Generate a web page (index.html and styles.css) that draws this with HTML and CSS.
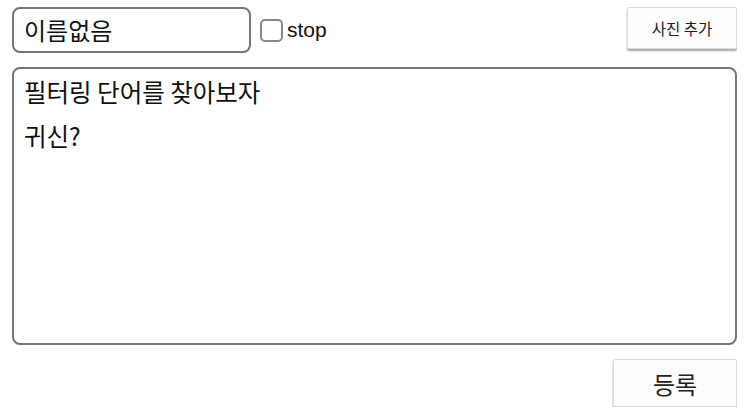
FILE: index.html
```html
<!DOCTYPE html>
<html>
<head>
    <title>글쓰기</title>
    <link rel="stylesheet" href="styles.css">
</head>
<body>
    <form class="post-form">
        <div class="top-row">
            <input type="text" class="name-input" value="이름없음">
            <label class="stop-label">
                <input type="checkbox" class="stop-check">
                <span>stop</span>
            </label>
            <button type="button" class="btn btn-photo">사진 추가</button>
        </div>
        <textarea class="content">필터링 단어를 찾아보자
귀신?</textarea>
        <div class="bottom-row">
            <button type="submit" class="btn btn-submit">등록</button>
        </div>
    </form>
</body>
</html>
```

FILE: styles.css
```css
body { margin: 7px 13px 0 12px; font-family: "Liberation Sans", "Noto Sans CJK KR", sans-serif; color: #111; background: #fff; }
.post-form { display: flex; flex-direction: column; gap: 14px; }
.top-row { display: flex; align-items: center; height: 46px; }
.name-input { width: 239px; height: 46px; box-sizing: border-box; border: 2px solid #777; border-radius: 8px; padding: 0 10px 2px; font-family: "Noto Sans CJK KR", sans-serif; font-size: 24px; color: #111; outline: none; }
.stop-label { display: flex; align-items: center; margin-left: 9px; font-size: 21px; gap: 4px; }
.stop-check { appearance: none; -webkit-appearance: none; width: 23px; height: 23px; margin: 0; border: 2px solid #888; border-radius: 5px; background: #fff; }
.btn { background: #fdfdfd; border: 1px solid #ddd; border-radius: 2px; box-shadow: 0 2px 2px rgba(0, 0, 0, 0.35); font-family: "Noto Sans CJK KR", sans-serif; color: #222; cursor: pointer; }
.btn-photo { margin-left: auto; align-self: flex-start; width: 110px; height: 42px; font-size: 15.5px; }
.content { display: block; width: 100%; height: 278px; box-sizing: border-box; border: 2px solid #777; border-radius: 8px; padding: 1px 10px; font-family: "Noto Sans CJK KR", sans-serif; font-size: 24.5px; line-height: 44px; color: #111; resize: none; outline: none; }
.bottom-row { display: flex; justify-content: flex-end; }
.btn-submit { width: 124px; height: 48px; font-size: 24px; }
```
